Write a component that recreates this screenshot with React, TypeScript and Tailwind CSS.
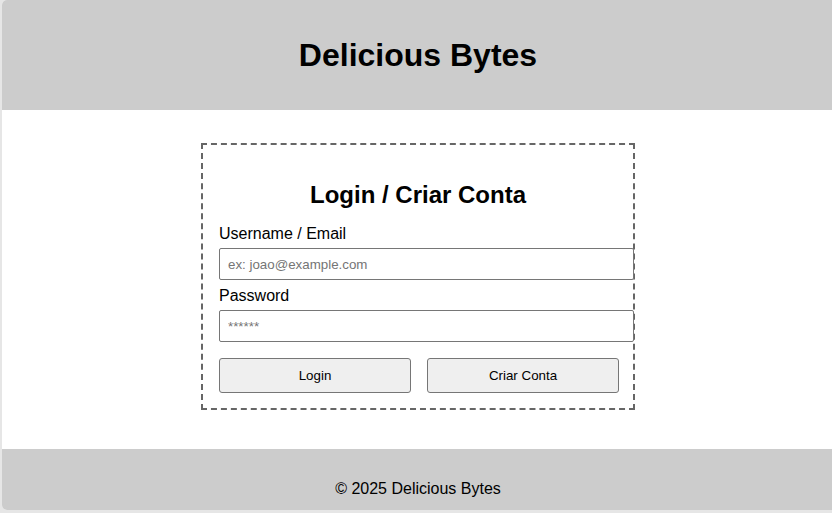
export default function App() {
  return (
    <div className="w-[832px] h-[513px] overflow-hidden bg-[#e6e6e6] font-['Liberation_Sans',Arial,sans-serif] text-black">
      <div className="ml-[2px] w-[832px] h-[510px] overflow-hidden rounded-l-[5px] bg-white flex flex-col">
        <header className="h-[110px] shrink-0 bg-[#cccccc] flex items-center justify-center">
          <h1 className="text-[32px] font-bold leading-[37px]">Delicious Bytes</h1>
        </header>

        <main className="h-[339px] shrink-0 pt-[33px] flex justify-center">
          <div className="w-[434px] h-[267px] border-2 border-dashed border-[#666666] px-4 pt-4">
            <h2 className="mt-[20px] mb-4 text-center text-[24px] font-bold leading-[27px]">
              Login / Criar Conta
            </h2>
            <label className="block pt-[1px] text-[16px] leading-[18px] mb-[5px]">Username / Email</label>
            <input
              type="text"
              placeholder="ex: joao@example.com"
              className="block w-[415px] h-[32px] px-2 border border-[#767676] rounded-[2px] text-[13.33px] placeholder:text-[#757575] bg-white"
            />
            <label className="block mt-[6px] pt-[1px] text-[16px] leading-[18px] mb-[5px]">Password</label>
            <input
              type="password"
              placeholder="******"
              className="block w-[415px] h-[32px] px-2 border border-[#767676] rounded-[2px] text-[13.33px] placeholder:text-[#757575] bg-white"
            />
            <div className="mt-4 flex gap-4">
              <button className="shrink-0 w-[192px] h-[35px] bg-[#efefef] border border-[#767676] rounded-[3px] text-[13.33px]">
                Login
              </button>
              <button className="shrink-0 w-[192px] h-[35px] bg-[#efefef] border border-[#767676] rounded-[3px] text-[13.33px]">
                Criar Conta
              </button>
            </div>
          </div>
        </main>

        <footer className="h-[80px] shrink-0 bg-[#cccccc] pt-[31px] text-center">
          <p className="text-[16px] leading-[18px]">© 2025 Delicious Bytes</p>
        </footer>
      </div>
    </div>
  );
}
